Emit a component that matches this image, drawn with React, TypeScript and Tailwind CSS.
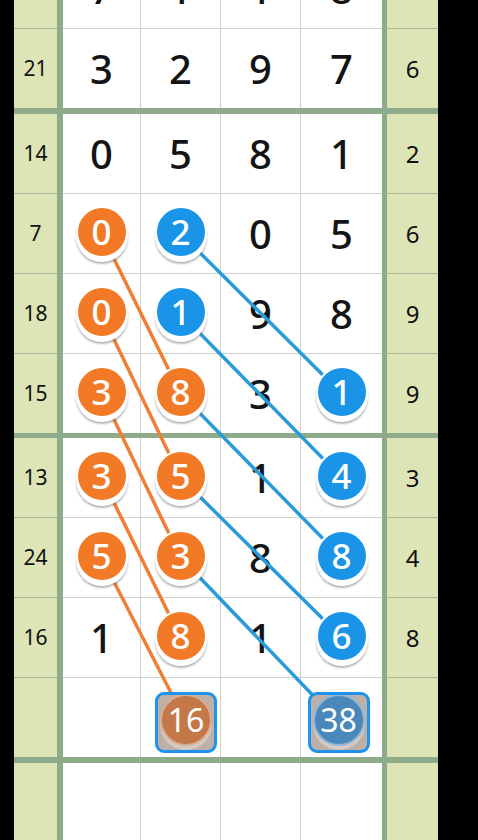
import React from 'react';

type Cell = { v: string; c?: 'o' | 'b' } | { box: string; tone: 'o' | 'b' } | null;

interface Row {
    label: string;
    right: string;
    cells: Cell[];
}

const groups: Row[][] = [
    [
        { label: '', right: '2', cells: [{ v: '7' }, { v: '1' }, { v: '1' }, { v: '8' }] },
        { label: '21', right: '6', cells: [{ v: '3' }, { v: '2' }, { v: '9' }, { v: '7' }] },
    ],
    [
        { label: '14', right: '2', cells: [{ v: '0' }, { v: '5' }, { v: '8' }, { v: '1' }] },
        { label: '7', right: '6', cells: [{ v: '0', c: 'o' }, { v: '2', c: 'b' }, { v: '0' }, { v: '5' }] },
        { label: '18', right: '9', cells: [{ v: '0', c: 'o' }, { v: '1', c: 'b' }, { v: '9' }, { v: '8' }] },
        { label: '15', right: '9', cells: [{ v: '3', c: 'o' }, { v: '8', c: 'o' }, { v: '3' }, { v: '1', c: 'b' }] },
    ],
    [
        { label: '13', right: '3', cells: [{ v: '3', c: 'o' }, { v: '5', c: 'o' }, { v: '1' }, { v: '4', c: 'b' }] },
        { label: '24', right: '4', cells: [{ v: '5', c: 'o' }, { v: '3', c: 'o' }, { v: '8' }, { v: '8', c: 'b' }] },
        { label: '16', right: '8', cells: [{ v: '1' }, { v: '8', c: 'o' }, { v: '1' }, { v: '6', c: 'b' }] },
        { label: '', right: '', cells: [null, { box: '16', tone: 'o' }, null, { box: '38', tone: 'b' }] },
    ],
    [{ label: '', right: '', cells: [null, null, null, null] }],
];

// column widths: first has no left line, the others carry a 1px border-l
const colW = ['w-[77px]', 'w-[80px] border-l', 'w-[80px] border-l', 'w-[82px] border-l'];

const orangeLines = [
    [101.5, 233.5, 180.5, 393.5],
    [101.5, 313.5, 180.5, 477.5],
    [101.5, 393.5, 180.5, 557.5],
    [101.5, 477.5, 180.5, 637.5],
    [101.5, 557.5, 186, 722],
];

const blueLines = [
    [180.5, 233.5, 341.5, 393.5],
    [180.5, 313.5, 341.5, 477.5],
    [180.5, 393.5, 341.5, 557.5],
    [180.5, 477.5, 341.5, 637.5],
    [180.5, 557.5, 338.5, 722],
];

function Token({ v, c }: { v: string; c: 'o' | 'b' }) {
    return (
        <div
            className={
                'relative z-10 w-[52px] h-[52px] -mt-[4px] rounded-full border-2 border-white flex items-center justify-center text-white text-[35px] leading-none font-medium shadow-[0_4px_0_0_#ffffff,0_6px_2px_0_rgba(90,90,110,0.45)] ' +
                (c === 'o' ? 'bg-[#f27a26]' : 'bg-[#1a94e6]')
            }
        >
            {v}
        </div>
    );
}

function SumBox({ v, tone }: { v: string; tone: 'o' | 'b' }) {
    return (
        <div
            className={
                'relative z-10 mt-[9px] w-[62px] h-[61px] rounded-[9px] border-[3px] border-[#1f93ec] bg-[#bdb0a8] flex items-center justify-center overflow-hidden ' +
                (tone === 'o' ? 'ml-[11px]' : 'mr-[6px]')
            }
        >
            <div
                className={
                    'w-[52px] h-[52px] -mt-[4px] rounded-full border-2 border-white/40 flex items-center justify-center text-white text-[32px] leading-none shadow-[0_4px_0_0_rgba(255,255,255,0.35)] ' +
                    (tone === 'o' ? 'bg-[#c47848]' : 'bg-[#4a88bb]')
                }
            >
                {v}
            </div>
        </div>
    );
}

function GridRow({ row, last, tall }: { row: Row; last: boolean; tall?: boolean }) {
    const h = tall ? 'h-[100px]' : last ? 'h-[79px]' : 'h-[80px]';
    const line = last ? '' : 'border-b';
    return (
        <div className={'flex ' + h}>
            <div className={'w-[43px] flex items-center justify-center bg-[#dde4b6] text-[21px] text-[#111] border-[#a9b79a] ' + line}>
                {row.label}
            </div>
            <div className="w-[6px] bg-[#8eab8b]" />
            {row.cells.map((cell, i) => (
                <div key={i} className={'flex items-center justify-center bg-white border-[#cfd1cf] ' + colW[i] + ' ' + line}>
                    {cell && 'v' in cell && (cell.c ? <Token v={cell.v} c={cell.c} /> : <span className="text-[40px] leading-none font-medium text-[#141414]">{cell.v}</span>)}
                    {cell && 'box' in cell && <SumBox v={cell.box} tone={cell.tone} />}
                </div>
            ))}
            <div className="w-[5px] bg-[#8eab8b]" />
            <div className={'w-[51px] flex items-center justify-center bg-[#dde4b6] text-[24px] text-[#111] border-[#a9b79a] ' + line}>
                {row.right}
            </div>
        </div>
    );
}

export default function App() {
    return (
        <div className="relative w-[478px] h-[840px] bg-black overflow-hidden" style={{ fontFamily: '"Noto Sans", Roboto, sans-serif' }}>
            <div className="ml-[14px] w-[424px] -mt-[51px] flex flex-col">
                {groups.map((g, gi) => (
                    <React.Fragment key={gi}>
                        {gi > 0 && <div className={'bg-[#8eab8b] ' + (gi === 2 ? 'h-[5px]' : 'h-[6px]')} />}
                        {g.map((row, ri) => (
                            <GridRow key={ri} row={row} last={ri === g.length - 1} tall={gi === 3} />
                        ))}
                    </React.Fragment>
                ))}
            </div>

            {/* connecting lines */}
            <svg className="absolute left-0 top-0" width="478" height="840">
                {orangeLines.map(([x1, y1, x2, y2], i) => (
                    <line key={'o' + i} x1={x1} y1={y1} x2={x2} y2={y2} stroke="#ef7f35" strokeWidth="3.5" />
                ))}
                {blueLines.map(([x1, y1, x2, y2], i) => (
                    <line key={'b' + i} x1={x1} y1={y1} x2={x2} y2={y2} stroke="#2a9ad8" strokeWidth="3.5" />
                ))}
            </svg>
        </div>
    );
}
